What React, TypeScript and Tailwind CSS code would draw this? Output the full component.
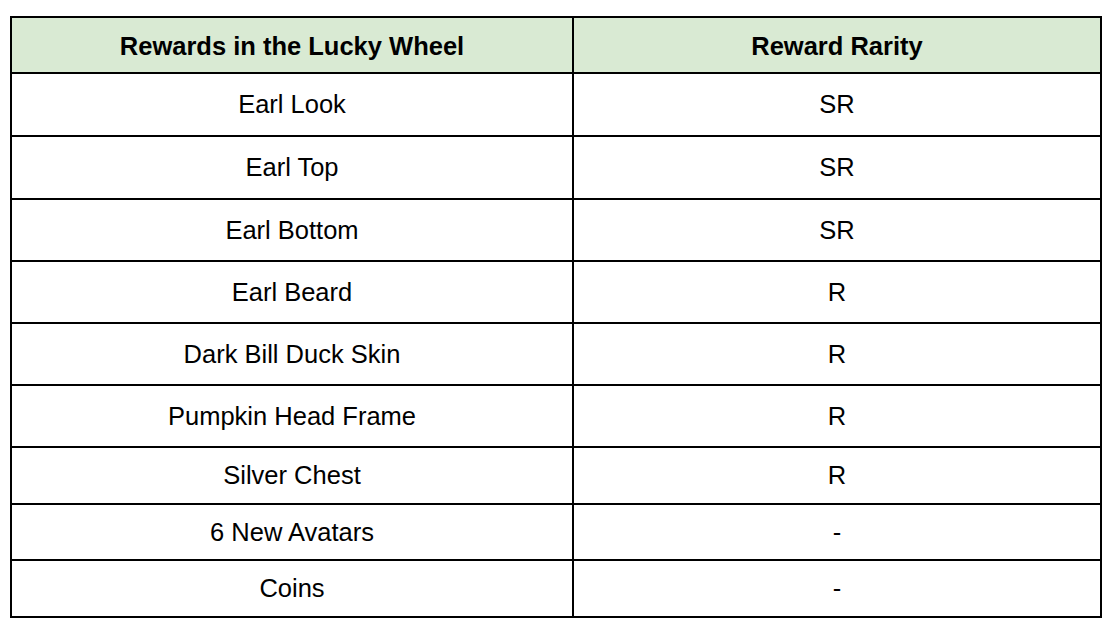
import React from "react";

const rows: { name: string; rarity: string; h: string }[] = [
  { name: "Earl Look", rarity: "SR", h: "h-[63px]" },
  { name: "Earl Top", rarity: "SR", h: "h-[63px]" },
  { name: "Earl Bottom", rarity: "SR", h: "h-[62px]" },
  { name: "Earl Beard", rarity: "R", h: "h-[62px]" },
  { name: "Dark Bill Duck Skin", rarity: "R", h: "h-[62px]" },
  { name: "Pumpkin Head Frame", rarity: "R", h: "h-[62px]" },
  { name: "Silver Chest", rarity: "R", h: "h-[57px]" },
  { name: "6 New Avatars", rarity: "-", h: "h-[56px]" },
  { name: "Coins", rarity: "-", h: "h-[57px]" },
];

export default function App() {
  return (
    <div
      className="w-[1120px] h-[638px] bg-white pt-[16px] pl-[10px] text-black"
      style={{ fontFamily: '"Liberation Sans", Arial, sans-serif' }}
    >
      <div className="w-[1092px] border-2 border-black">
        <div className="grid grid-cols-[560px_2px_526px] h-[54px] bg-[#d9ead3]">
          <div className="flex items-center justify-center text-[25.5px] font-bold pt-[2px]">
            Rewards in the Lucky Wheel
          </div>
          <div className="bg-black" />
          <div className="flex items-center justify-center text-[25.5px] font-bold pt-[2px]">
            Reward Rarity
          </div>
        </div>
        {rows.map((r) => (
          <div
            key={r.name}
            className={`grid grid-cols-[560px_2px_526px] border-t-2 border-black ${r.h}`}
          >
            <div className="flex items-center justify-center text-[25.5px]">
              {r.name}
            </div>
            <div className="bg-black" />
            <div className="flex items-center justify-center text-[25.5px]">
              {r.rarity}
            </div>
          </div>
        ))}
      </div>
    </div>
  );
}
